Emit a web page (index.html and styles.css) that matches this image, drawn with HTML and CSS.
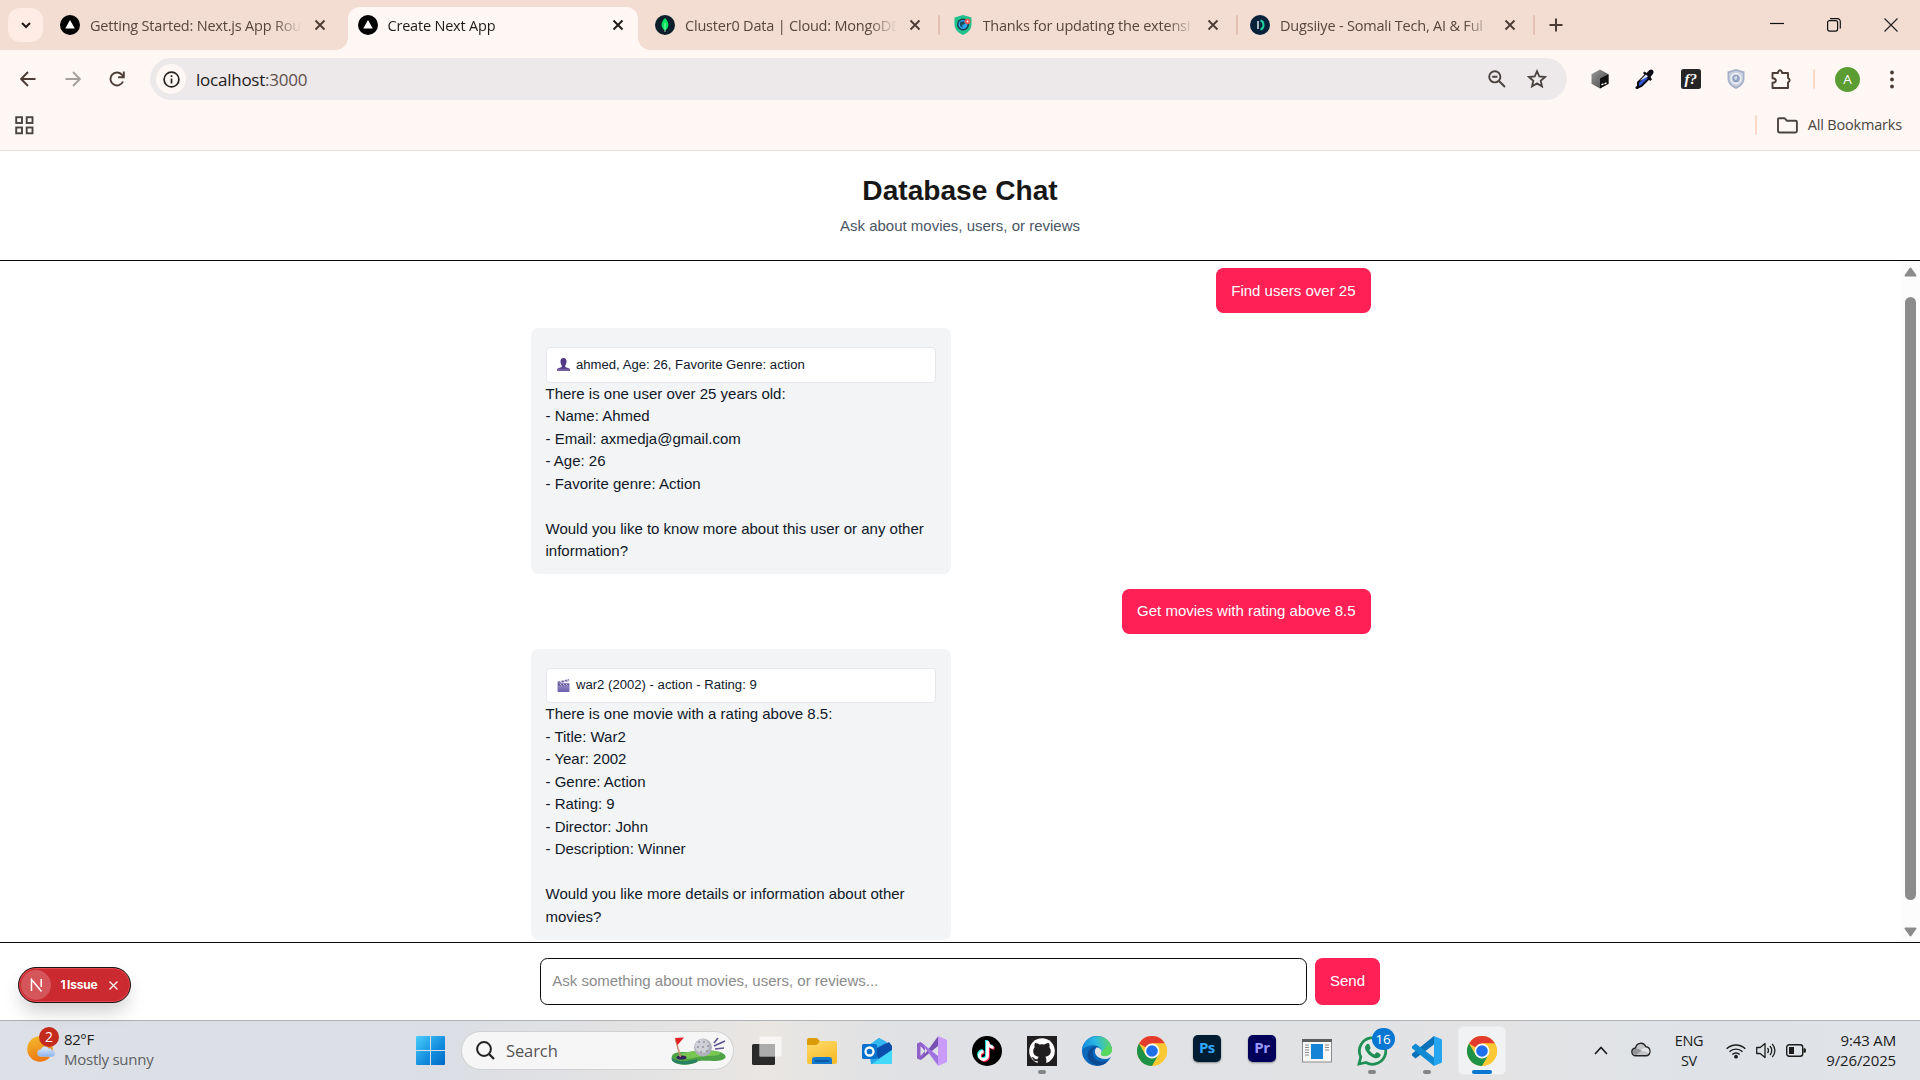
FILE: index.html
```html
<!DOCTYPE html>
<html lang="en">
<head>
<meta charset="utf-8">
<title>Create Next App</title>
<link rel="stylesheet" href="styles.css">
</head>
<body>
<svg class="defs" width="0" height="0" aria-hidden="true">
  <defs>
    <linearGradient id="sun" x1="0" y1="0" x2="0.3" y2="1"><stop offset="0" stop-color="#f2bd2c"/><stop offset="1" stop-color="#ee7a13"/></linearGradient>
    <linearGradient id="cloud" x1="0" y1="0" x2="0" y2="1"><stop offset="0" stop-color="#e3ecfa"/><stop offset="1" stop-color="#8db4ef"/></linearGradient>
    <linearGradient id="win" x1="0" y1="0" x2="1" y2="1"><stop offset="0" stop-color="#4bcdfc"/><stop offset="0.55" stop-color="#1490df"/><stop offset="1" stop-color="#0068c6"/></linearGradient>
    <linearGradient id="folder" x1="0" y1="0" x2="0.5" y2="1"><stop offset="0" stop-color="#ffdc6b"/><stop offset="1" stop-color="#f8bd2c"/></linearGradient>
    <linearGradient id="edge1" x1="0" y1="0.5" x2="1" y2="0.3"><stop offset="0" stop-color="#1388dd"/><stop offset="0.5" stop-color="#2cbbe2"/><stop offset="1" stop-color="#60d85a"/></linearGradient>
    <linearGradient id="clap" x1="0" y1="0" x2="0" y2="1"><stop offset="0" stop-color="#a095cc"/><stop offset="1" stop-color="#6a5fae"/></linearGradient>
    <linearGradient id="cube" x1="0" y1="0" x2="1" y2="1"><stop offset="0" stop-color="#999"/><stop offset="1" stop-color="#444"/></linearGradient>
    <symbol id="i-close" viewBox="0 0 12 12"><path d="M1.5 1.5l9 9M10.5 1.5l-9 9" stroke="currentColor" stroke-width="1.9"/></symbol>
    <symbol id="i-next" viewBox="0 0 20 20"><circle cx="10" cy="10" r="10" fill="#000"/><path d="M10 5l4.8 8.6H5.2z" fill="#fff"/></symbol>
    <symbol id="i-shield" viewBox="0 0 18 20"><path d="M9 0l8.500 2.500v6.500c0 5-3 8.500-8.500 11C3.500 17.500.5 14 .5 9V2.500z" fill="currentColor"/></symbol>
    <symbol id="i-chrome" viewBox="0 0 30 30">
      <circle cx="15" cy="15" r="15" fill="#fcc934"/>
      <path d="M2 7.500A15 15 0 0 1 28 7.500H15L8.500 11.250z" fill="#e33b2e"/>
      <path d="M2 7.500L8.500 18.750 15 22.500h6.500L15 30A15 15 0 0 1 2 7.500z" fill="#1e9347"/>
      <path d="M15 22.500L21.500 18.750 15 30z" fill="#1e9347"/>
      <path d="M28 7.500H15v7.500l6.500 3.750L15 30A15 15 0 0 0 28 7.500z" fill="#fcc934"/>
      <circle cx="15" cy="15" r="7.500" fill="#fff"/><circle cx="15" cy="15" r="5.800" fill="#1f6feb"/>
    </symbol>
  </defs>
</svg>

<header class="browser">
  <div class="tabstrip">
    <button class="tab-search"><svg width="12" height="12" viewBox="0 0 12 12"><path d="M2 4l4 4 4-4" fill="none" stroke="#1f1a18" stroke-width="2"/></svg></button>
    <div class="tab">
      <svg class="favicon"><use href="#i-next"/></svg><span class="tab-title">Getting Started: Next.js App Rou</span><svg class="tab-close"><use href="#i-close"/></svg>
    </div>
    <div class="tab active">
      <svg class="favicon"><use href="#i-next"/></svg><span class="tab-title">Create Next App</span><svg class="tab-close"><use href="#i-close"/></svg>
    </div>
    <div class="tab ruled">
      <svg class="favicon" viewBox="0 0 20 20"><circle cx="10" cy="10" r="10" fill="#0a1e2b"/><path d="M10 3c5 5 4 10 0 12.500C6 13 5 8 10 3z" fill="#00e560"/><path d="M10 8v9" stroke="#b7f5cf" stroke-width=".8"/></svg><span class="tab-title">Cluster0 Data | Cloud: MongoDB</span><svg class="tab-close"><use href="#i-close"/></svg>
    </div>
    <div class="tab ruled">
      <svg class="favicon" viewBox="0 0 20 20"><path d="M10 0l8.500 2.500V9c0 5-3 8.500-8.500 11C4.500 17.500 1.500 14 1.500 9V2.500z" fill="#1fc18c"/><circle cx="10" cy="9.500" r="6" fill="#173b4a"/><circle cx="10" cy="9.500" r="4.500" fill="#2da7f3"/><path d="M7 7l4-1 1 3-3 1 1 3-3-2z" fill="#17505c"/><circle cx="14.500" cy="6.500" r="2.800" fill="#f0524f"/><circle cx="14.500" cy="6.500" r="1" fill="#fff"/></svg><span class="tab-title">Thanks for updating the extensi</span><svg class="tab-close"><use href="#i-close"/></svg>
    </div>
    <div class="tab ruled">
      <svg class="favicon" viewBox="0 0 20 20"><circle cx="10" cy="10" r="10" fill="#07233b"/><path d="M10.500 5.500c4 1 4 8 0 9" fill="none" stroke="#1fd0a0" stroke-width="2"/><path d="M8 6v8" stroke="#d5e8ef" stroke-width="1.500"/></svg><span class="tab-title">Dugsiiye - Somali Tech, AI &amp; Ful</span><svg class="tab-close"><use href="#i-close"/></svg>
    </div>
    <button class="new-tab"><svg width="14" height="14" viewBox="0 0 14 14"><path d="M7 .5v13M.5 7h13" stroke="#4c3c35" stroke-width="2"/></svg></button>
    <div class="window-controls">
      <svg width="14" height="14" viewBox="0 0 14 14"><path d="M0 5.500h14" stroke="#111" stroke-width="1.200"/></svg>
      <svg width="14" height="14" viewBox="0 0 14 14"><rect x=".6" y="2.600" width="10" height="10.500" rx="2" fill="none" stroke="#111" stroke-width="1.200"/><path d="M3 .6h7a3 3 0 0 1 3.300 3.200V10.500" fill="none" stroke="#111" stroke-width="1.200"/></svg>
      <svg width="14" height="14" viewBox="0 0 14 14"><path d="M.5 .5l13 13M13.500 .5l-13 13" stroke="#222" stroke-width="1.200"/></svg>
    </div>
  </div>

  <div class="toolbar">
    <div class="nav">
      <svg width="16" height="16" viewBox="0 0 16 16"><path d="M15.500 8H1.500M8 1L1.200 8 8 15" fill="none" stroke="#4c3c35" stroke-width="1.900"/></svg>
      <svg width="16" height="16" viewBox="0 0 16 16"><path d="M.5 8h14M8 1l6.800 7L8 15" fill="none" stroke="#a79f9b" stroke-width="1.900"/></svg>
      <svg width="16" height="16" viewBox="0 0 16 16"><path d="M14 10.500A6.500 6.500 0 1 1 12.800 3.600L14.500 5.500" fill="none" stroke="#4c3c35" stroke-width="1.900"/><path d="M14.800 .5v5.800H9.200" fill="none" stroke="#4c3c35" stroke-width="1.900"/></svg>
    </div>
    <div class="omnibox">
      <span class="site-info"><svg width="17" height="17" viewBox="0 0 17 17"><circle cx="8.500" cy="8.500" r="7.400" fill="none" stroke="#27211f" stroke-width="1.700"/><path d="M8.500 7.500v5M8.500 4.200v1.900" stroke="#27211f" stroke-width="1.700"/></svg></span>
      <span class="url">localhost<span class="port">:3000</span></span>
      <svg class="omni-icon" width="18" height="18" viewBox="0 0 18 18"><circle cx="6.800" cy="6.800" r="5.600" fill="none" stroke="#4a423f" stroke-width="1.900"/><path d="M4.200 6.800h5.200M11 11l6 6" stroke="#4a423f" stroke-width="1.900"/></svg>
      <svg class="omni-icon" width="20" height="20" viewBox="0 0 20 20"><path d="M10 2.200l2.300 5.300 5.700.5-4.300 3.800 1.300 5.600L10 14.400l-5 3 1.300-5.600L2 8l5.700-.5z" fill="none" stroke="#4a423f" stroke-width="1.800"/></svg>
    </div>
    <div class="extensions">
      <svg width="18" height="20" viewBox="0 0 18 20"><path d="M9 .5l8.500 4.800v9.500L9 19.500.5 14.800V5.300z" fill="url(#cube)"/><path d="M9 9.500l8.500-4.200v9.500L9 19.500z" fill="#111"/><path d="M10.500 15.800l2-1M13.500 14.800l2-1" stroke="#fff" stroke-width="1.300"/></svg>
      <svg width="20" height="20" viewBox="0 0 20 20"><path d="M3 13.500L11 5.500l3.500 3.500-8 8-3.500 1.500z" fill="#3155d6" stroke="#0b0b14" stroke-width="2"/><path d="M8 4l1.500-1.500 2 1.500L14 1.500c3-2.500 6 .8 3.800 3.500L15.500 8l1.500 2.500-1.800 1.500z" fill="#0b0b14"/><path d="M4.500 12L11 5.500l2 2z" fill="#dfe4f5"/><circle cx="2" cy="18.500" r="1.500" fill="#0b0b14"/></svg>
      <svg width="20" height="20" viewBox="0 0 20 20"><rect width="20" height="20" rx="2.500" fill="#262626"/><text x="3.500" y="15" class="fq">f?</text></svg>
      <svg class="ext-shield" width="18" height="20" viewBox="0 0 18 20"><use href="#i-shield"/><path d="M9 2l6.700 2v5.200c0 3.900-2.200 6.600-6.700 8.600C4.500 15.800 2.300 13.100 2.300 9.200V4z" fill="#cbd2e2"/><circle cx="9" cy="9.500" r="5" fill="none" stroke="#eef1f7" stroke-width="1.300"/><circle cx="9" cy="9.500" r="3.700" fill="#95a3c3"/><path d="M7 8l3-1v3l-2 1z" fill="#d9dfea"/></svg>
      <svg width="21" height="21" viewBox="0 0 21 21"><path d="M1.500 4H7V3q2-3.400 4 0v1h6v5q3.400 2 0 4.500V19H1.500v-5.200c4.500-.3 4.500-4.300 0-4.600z" fill="none" stroke="#4c3c35" stroke-width="1.900" stroke-linejoin="round"/></svg>
    </div>
    <span class="bar-rule"></span>
    <span class="avatar">A</span>
    <svg class="menu-dots" width="4" height="19" viewBox="0 0 4 19"><g fill="#4c3c35"><circle cx="2" cy="2.500" r="1.900"/><circle cx="2" cy="9.500" r="1.900"/><circle cx="2" cy="16.500" r="1.900"/></g></svg>
  </div>

  <div class="bookmarks">
    <svg width="19" height="19" viewBox="0 0 19 19"><g fill="none" stroke="#4a4441" stroke-width="1.900"><rect x="1.200" y="1.200" width="5.800" height="5.800"/><rect x="11.700" y="1.200" width="5.800" height="5.800"/><rect x="1.200" y="11.500" width="5.800" height="5.800"/><rect x="11.700" y="11.500" width="5.800" height="5.800"/></g></svg>
    <span class="bar-rule"></span>
    <svg width="21" height="17" viewBox="0 0 21 17"><path d="M1 2.500Q1 1.200 2.300 1.200H7.500L10 3.700h8.500q1.400 0 1.400 1.400v9q0 1.400-1.400 1.400h-16Q1 15.500 1 14.100z" fill="none" stroke="#4a4441" stroke-width="1.900"/></svg>
    <span class="bookmarks-label">All Bookmarks</span>
  </div>
</header>

<main class="app">
  <div class="app-header">
    <h1>Database Chat</h1>
    <p>Ask about movies, users, or reviews</p>
  </div>
  <div class="scroller">
    <div class="scroll-view">
      <div class="messages">
        <div class="bubble user">Find users over 25</div>
        <div class="bubble bot">
          <div class="record"><svg width="13" height="13" viewBox="0 0 13 13"><path d="M6.500 0C9 0 9.700 1.800 9.500 4 9.300 6 8.500 7 8.200 7.800V9l4 1.500q.8.400.8 2.500H0Q0 10.900.8 10.500l4-1.500V7.800C4.500 7 3.700 6 3.500 4 3.300 1.800 4 0 6.500 0z" fill="#533a86"/><path d="M0 13q0-1.600.5-2.200h12q.5.600.5 2.200z" fill="#75619f"/></svg><span>ahmed, Age: 26, Favorite Genre: action</span></div>
          <p>There is one user over 25 years old:
- Name: Ahmed
- Email: axmedja@gmail.com
- Age: 26
- Favorite genre: Action

Would you like to know more about this user or any other information?</p>
        </div>
        <div class="bubble user">Get movies with rating above 8.5</div>
        <div class="bubble bot">
          <div class="record"><svg width="13" height="13" viewBox="0 0 13 13"><rect x=".5" y="4" width="12" height="9" rx=".8" fill="url(#clap)"/><path d="M.3 2.800L11.800 0l.6 2L.8 4.800z" fill="#75699f"/><path d="M3 2.200l2 1.400M6.500 1.300l2 1.400M10 .5l1.500 1.200" stroke="#e6e2f3" stroke-width="1.100"/><path d="M1 4.800h11v1.700H1z" fill="#5c4f92"/><path d="M3 4.800l1.500 1.700M6 4.800l1.500 1.700M9 4.800l1.500 1.700" stroke="#ddd7ef"/></svg><span>war2 (2002) - action - Rating: 9</span></div>
          <p>There is one movie with a rating above 8.5:
- Title: War2
- Year: 2002
- Genre: Action
- Rating: 9
- Director: John
- Description: Winner

Would you like more details or information about other movies?</p>
        </div>
      </div>
    </div>
    <div class="scrollbar">
      <svg width="13" height="10" viewBox="0 0 13 10"><path d="M6.500 1.500L11.500 8.500h-10z" fill="#8b8b8b" stroke="#8b8b8b" stroke-width="2" stroke-linejoin="round"/></svg>
      <span class="thumb"></span>
      <svg width="13" height="10" viewBox="0 0 13 10"><path d="M6.500 8.500L11.500 1.500h-10z" fill="#8b8b8b" stroke="#8b8b8b" stroke-width="2" stroke-linejoin="round"/></svg>
    </div>
  </div>
  <form class="composer">
    <div class="composer-row">
      <input type="text" placeholder="Ask something about movies, users, or reviews...">
      <button type="button">Send</button>
    </div>
  </form>
  <div class="issue-badge">
    <span class="issue-logo"><svg width="13" height="14" viewBox="0 0 13 14"><path d="M1.500 13V1.500L11.500 13.500M11.200 1v8" fill="none" stroke="#fff" stroke-width="1.500"/></svg></span>
    <span class="issue-text">1 Issue</span>
    <svg width="9" height="9" viewBox="0 0 9 9"><path d="M.5 .5l8 8M8.500 .5l-8 8" stroke="#fff" stroke-width="1.200"/></svg>
  </div>
</main>

<footer class="taskbar">
  <div class="weather">
    <span class="weather-icon">
      <svg width="29" height="26" viewBox="0 0 29 26"><circle cx="13" cy="13" r="12.800" fill="url(#sun)"/><path d="M14 20.500a3.500 3.500 0 0 1 0-7c1-3.500 6-3.800 7.500-1 3-.5 3.800 1.500 3.600 2.500 3.500 0 3.500 5.500 0 5.500z" fill="url(#cloud)" stroke="#a8c3f0" stroke-width=".6"/></svg>
      <span class="alert-count">2</span>
    </span>
    <span class="weather-text"><b>82°F</b><span>Mostly sunny</span></span>
  </div>
  <div class="start-group">
    <svg class="start" width="29" height="29" viewBox="0 0 29 29"><path d="M1 0h13v14H0V1q0-1 1-1zM15 0h13q1 0 1 1v13H15zM0 15h14v14H1q-1 0-1-1zM15 15h14v13q0 1-1 1H15z" fill="url(#win)"/></svg>
    <div class="search">
      <svg width="19" height="19" viewBox="0 0 19 19"><circle cx="8" cy="8" r="6.900" fill="none" stroke="#222" stroke-width="2"/><path d="M13 13l5 5" stroke="#222" stroke-width="2.300"/></svg>
      <span>Search</span>
      <svg width="56" height="28" viewBox="0 0 56 28"><path d="M1 19c1-4 8-4 16-4 9-1 21-3 32 0 6 2 8 6 2 8-7 2-15 0-23 1-6 4-17 5-24 2-3-2-4-4-3-7z" fill="#4da447"/><path d="M12 16c9-2 27-4 36-1 5 3-5 4-12 4-10 0-18 4-27 3-4-1-2-5 3-6z" fill="#79c653"/><path d="M1 21c5 4 15 4 25 1v3c-7 3-16 3-21 1-3-1-5-3-4-5z" fill="#288063"/><ellipse cx="10.500" cy="20.500" rx="5" ry="2" fill="#33255b"/><path d="M4.500 2.500L9.500 20" stroke="#cb8b72" stroke-width="1.500"/><path d="M4 1l9-.5-6.500 7.500z" fill="#e31f24"/><circle cx="32" cy="10.500" r="9" fill="#b0b1bc"/><circle cx="31" cy="9" r="7" fill="#cfcfd6"/><g fill="#92939f"><circle cx="28" cy="5" r="1"/><circle cx="33" cy="5" r="1"/><circle cx="27" cy="10" r="1"/><circle cx="32" cy="10" r="1"/><circle cx="37" cy="9" r="1"/><circle cx="30" cy="15" r="1"/><circle cx="36" cy="14" r="1"/></g><path d="M43 6l4-5M43 9l11-5M44 12l9-1" stroke="#5e5790" stroke-width="1.600"/></svg>
    </div>
  </div>
  <div class="apps">
    <span class="task"><svg width="30" height="30" viewBox="0 0 30 30"><rect x="0" y="8" width="23" height="21" rx="1.500" fill="#2a2a2a"/><rect x="7.500" y=".5" width="22" height="20" rx="1" fill="#fff" fill-opacity=".65"/><rect x="7.500" y="8" width="15.500" height="12.500" fill="#aaa" fill-opacity=".8"/></svg></span>
    <span class="task"><svg width="30" height="30" viewBox="0 0 30 30"><path d="M0 4Q0 2 2 2h8l3 3h3v6H0z" fill="#dc9b08"/><path d="M0 9h9q2 0 3.500-4H28q2 0 2 2v19q0 2-2 2H2q-2 0-2-2z" fill="url(#folder)"/><path d="M5 28v-4q0-3 3-3h14q3 0 3 3v4z" fill="#1478cc"/><path d="M8 25h14" stroke="#075196" stroke-width="1.500"/></svg></span>
    <span class="task"><svg width="30" height="30" viewBox="0 0 30 30"><path d="M6 10L17 2l13 8v16q0 2-2 2H9z" fill="#2aa5e9"/><path d="M13 13L27 6l3 4v4L16 23z" fill="#0b4eab"/><path d="M12 12l13-6-8-4-11 8z" fill="#35b8f1"/><path d="M10 28L30 14v12q0 2-2 2z" fill="#43d9fa"/><rect x="0" y="8" width="15" height="15" rx="1.500" fill="#0672ce"/><circle cx="7.500" cy="15.500" r="4" fill="none" stroke="#fff" stroke-width="2.300"/></svg></span>
    <span class="task"><svg width="30" height="30" viewBox="0 0 30 30"><path d="M0 7.500L3.500 6 8 9.500V20.500L3.500 24 0 22.500z" fill="#8e60c8"/><path d="M3.500 10v10L8 15z" fill="#e0e1e4"/><path d="M3.500 24L21 .500V10L8 20.500z" fill="#7550b0"/><path d="M3.500 6L8 9.500 21 20v9.500z" fill="#a173e2"/><path d="M21 0l9 4v22l-9 4z" fill="#c99af8"/></svg></span>
    <span class="task"><svg width="30" height="30" viewBox="0 0 30 30"><circle cx="15" cy="15" r="15" fill="#000"/><g fill="none" stroke-width="2.800"><path d="M15.500 5v14.500a4 4 0 1 1-4-4M15.500 6c.5 3.500 3 5 6 5.500" stroke="#25f4ee" transform="translate(-1-1)"/><path d="M15.500 5v14.500a4 4 0 1 1-4-4M15.500 6c.5 3.500 3 5 6 5.500" stroke="#fe2c55" transform="translate(1 1)"/><path d="M15.500 5v14.500a4 4 0 1 1-4-4M15.500 6c.5 3.500 3 5 6 5.500" stroke="#fff"/></g></svg></span>
    <span class="task running"><svg width="30" height="30" viewBox="0 0 30 30"><rect width="30" height="30" fill="#211e1f"/><circle cx="15" cy="15" r="12.800" fill="#fff"/><path d="M8 7c2-.2 3.500.8 4.500 1.600q2.500-.6 5 0C18.500 7.800 20 6.800 22 7q1 2.300.4 4.200Q24 13 23.800 15.500c-.3 3.500-2.500 4.800-5.500 5.300q1.200 1.200 1 3V28h-8.600v-3c-3 .6-4-.6-5-2.500l-1.500-1.500c2-.5 3 1.200 4 2 .8.500 1.700.4 2.500 0q.1-1.500 1-2.200c-3-.5-5.200-1.800-5.500-5.300Q6 13 7.600 11.200 7 9.300 8 7z" fill="#211e1f"/></svg></span>
    <span class="task"><svg width="30" height="30" viewBox="0 0 30 30"><circle cx="15" cy="15" r="15" fill="#0c69bd"/><path d="M0 14C1-2 27-6 30 13c.5 6-5 8-9 7-3-1-2-2-1.500-4C20 9 8 6 0 14z" fill="url(#edge1)"/><path d="M10.500 17c0 7 8 11 16 7-7 10-21 5-21-5 0-6 6-9 10-8-4 1-5 3.500-5 6z" fill="#0b4b96"/><path d="M14.500 11.500c-4 4-.5 11.500 9 11.500 3 0 5-1.500 6.500-3V14c-1 5-6 7-10 5.500-2-1 0-2-.3-4-.3-2.500-3-4.500-5.200-4z" fill="#e0e2e4"/><path d="M30 12c1 6-4.500 9-9 8-3-1-2-2-1.500-4L25 10z" fill="#57d660"/></svg></span>
    <span class="task"><svg width="30" height="30"><use href="#i-chrome"/></svg></span>
    <span class="task"><span class="adobe ps">Ps</span></span>
    <span class="task"><span class="adobe pr">Pr</span></span>
    <span class="task"><svg width="30" height="24" viewBox="0 0 30 24"><rect x=".5" y=".5" width="29" height="22.500" fill="#f7f7f7" stroke="#8b8b8b"/><path d="M0 0h30v3H0z" fill="#5d5d5d"/><rect x="9" y="5" width="12" height="15" fill="#1783d6"/><path d="M3 6h4M3 8.500h4M3 11h4M3 13.500h4M3 16h4M23 6h4M23 8.500h4M23 11h4" stroke="#8c8c8c"/></svg></span>
    <span class="task running"><svg width="30" height="30" viewBox="0 0 30 30"><path d="M2 28l1.800-7A13.200 13.200 0 1 1 9 26.500z" fill="#e5eae8" stroke="#1f8f56" stroke-width="2.800"/><path d="M9.500 8.500q2-1.500 3 .5l1 2.500q.3 1-1.200 2.500c1.300 2.300 3 3.700 5.200 4.500l1.700-1.900q.7-.6 1.500-.1l2.600 1.400q1 1.200-.6 3.200c-2.500 2.200-6 .8-9-1.200-3-2.200-5.500-5.500-5.700-8q-.1-2.200 1.500-3.400z" fill="#1f8f56"/></svg><span class="unread">16</span></span>
    <span class="task running"><svg width="30" height="30" viewBox="0 0 30 30"><path d="M22 0l8 3.500v23L22 30z" fill="#25a5f0"/><path d="M22 0v8.500L3.500 22.500 0 19.500q-.5-1 0-1.800z" fill="#0871b8"/><path d="M22 30v-8.500L3.500 7.500 0 10.500q-.5 1 0 1.800z" fill="#128bd3"/></svg></span>
    <span class="task current"><svg width="30" height="30"><use href="#i-chrome"/></svg></span>
  </div>
  <div class="tray">
    <svg class="chev" width="14" height="9" viewBox="0 0 14 9"><path d="M1 8l6-6.500L13 8" fill="none" stroke="#1c1c1c" stroke-width="1.700"/></svg>
    <svg class="drive" width="20" height="15" viewBox="0 0 20 15"><path d="M5 13.800C0 13.800-.8 7 4.500 6 5.500.5 12.500-.5 14.800 4.800c5.500.5 5.500 9 .2 9z" fill="#c3c5c8" stroke="#222" stroke-width="1.400"/><path d="M5 13c-4 0-4.500-5-.5-6.200 3-.5 4 .8 6 2L5 13z" fill="#919396"/><path d="M9.500 8L14 5.500c4 .2 5 3.500 4 5.500z" fill="#e3e5e8"/></svg>
    <span class="lang"><span>ENG</span><span>SV</span></span>
    <svg class="wifi" width="20" height="16" viewBox="0 0 20 16"><g fill="none" stroke="#1c1c1c" stroke-width="1.400"><path d="M.7 5.800a13.200 13.200 0 0 1 18.600 0M3.500 8.800a9.200 9.200 0 0 1 13 0M6.300 11.500a5.200 5.200 0 0 1 7.400 0"/></g><circle cx="10" cy="13.700" r="1.900" fill="#1c1c1c"/></svg>
    <svg class="sound" width="20" height="17" viewBox="0 0 20 17"><g fill="none" stroke="#1c1c1c" stroke-width="1.300" stroke-linejoin="round"><path d="M.7 5.500h3.500L9 1.500v14L4.200 11.500H.7z"/><path d="M11.500 6q2 2.500 0 5M14 4q3.500 4.500 0 9M16.300 1.800q5.200 6.700 0 13.400"/></g></svg>
    <svg class="battery" width="20" height="13" viewBox="0 0 20 13"><rect x=".7" y=".7" width="16" height="11.600" rx="2.500" fill="none" stroke="#1c1c1c" stroke-width="1.400"/><rect x="3" y="3" width="5" height="7" fill="#1c1c1c"/><path d="M17.500 4.200h1.200q1.300 0 1.300 2.300t-1.300 2.300h-1.200z" fill="#1c1c1c"/></svg>
    <span class="clock"><span>9:43 AM</span><span>9/26/2025</span></span>
  </div>
</footer>
</body>
</html>
```
FILE: styles.css
```css
* { box-sizing: border-box; }
html, body { margin: 0; height: 1080px; overflow: hidden; }
body {
  display: flex;
  flex-direction: column;
  width: 1920px;
  background: #fff;
  font-family: "Liberation Sans", Arial, sans-serif;
  font-size: 15px;
}
svg { display: block; flex: none; }
.defs { position: absolute; }
button { border: 0; padding: 0; font: inherit; }

/* Browser frame */
.browser {
  flex: none;
  height: 151px;
  background: #fff7f4;
  border-bottom: 1px solid #eadfdb;
  font-family: "Open Sans", "Noto Sans", sans-serif;
  font-size: 14.5px;
  color: #57463e;
}
.tabstrip {
  display: flex;
  height: 50px;
  padding-left: 8px;
  background: #f3ddd2;
}
.tab-search {
  display: flex;
  align-items: center;
  justify-content: center;
  width: 35px;
  height: 34px;
  margin: 8px 7px 0 0;
  border-radius: 12px;
  background: #ffece4;
}
.tab {
  position: relative;
  display: flex;
  align-items: center;
  width: 297.5px;
  height: 50px;
  padding-left: 10px;
}
.favicon { width: 20px; height: 20px; }
.tab-title {
  flex: none;
  width: 216px;
  margin: 0 8px 0 10px;
  white-space: nowrap;
  letter-spacing: -0.2px;
  -webkit-mask-image: linear-gradient(to right, #000 184px, transparent 212px);
  mask-image: linear-gradient(to right, #000 184px, transparent 212px);
}
.tab-close { width: 12px; height: 12px; color: #4c3c35; }
.tab.active { color: #1f1a18; z-index: 1; }
.tab.active > * { position: relative; }
.tab.active .tab-close { color: #1f1a18; }
.tab.active::before {
  content: "";
  position: absolute;
  left: 0;
  top: 7px;
  width: 290px;
  height: 43px;
  border-radius: 12px 12px 0 0;
  background: #fff7f4;
}
.tab.active::after {
  content: "";
  position: absolute;
  left: -12px;
  bottom: 0;
  width: 314px;
  height: 12px;
  background:
    radial-gradient(circle at 0 0, transparent 11.5px, #fff7f4 12px) left / 12px 12px no-repeat,
    radial-gradient(circle at 100% 0, transparent 11.5px, #fff7f4 12px) right / 12px 12px no-repeat;
}
.tab.ruled::after {
  content: "";
  width: 2px;
  height: 20px;
  margin-left: 17px;
  border-radius: 1px;
  background: #e2c1b2;
}
.new-tab { width: 40px; padding-left: 11px; background: none; }
.window-controls {
  display: flex;
  align-items: center;
  gap: 43px;
  margin-left: auto;
  padding-right: 22px;
}

.toolbar {
  display: flex;
  align-items: center;
  height: 58px;
  background: #fff7f4;
}
.nav { display: flex; gap: 28.5px; width: 150px; padding-left: 20px; }
.omnibox {
  display: flex;
  align-items: center;
  width: 1417px;
  height: 42px;
  padding: 0 20px 0 6px;
  border-radius: 21px;
  background: #ede8ea;
}
.site-info {
  display: flex;
  align-items: center;
  justify-content: center;
  width: 30px;
  height: 30px;
  border-radius: 50%;
  background: #fff7f4;
}
.url {
  flex: 1;
  padding-left: 10px;
  font-size: 17px;
  letter-spacing: -0.24px;
  color: #1f1a18;
}
.port { color: #5b504b; }
.omni-icon + .omni-icon { margin-left: 21.5px; }
.extensions { display: flex; align-items: center; gap: 26px; margin-left: 24px; }
.ext-shield { color: #a6b0c9; }
.bar-rule { width: 2px; height: 20px; border-radius: 1px; background: #fbd8c8; }
.toolbar .bar-rule { margin-left: 21px; }
.fq { font: italic bold 15px "Liberation Serif", serif; fill: #fff; }
.avatar {
  width: 25px;
  height: 25px;
  margin-left: 20px;
  border-radius: 50%;
  background: #5b9c33;
  color: #fff;
  font-size: 13.5px;
  line-height: 25px;
  text-align: center;
}
.menu-dots { margin-left: 30px; }

.bookmarks {
  display: flex;
  align-items: center;
  height: 34px;
  padding: 0 18px 0 15px;
}
.bookmarks .bar-rule { margin: 0 20px 0 auto; }
.bookmarks-label { margin: -2px 0 0 10px; letter-spacing: -0.18px; color: #4a4441; }

/* Chat page */
.app {
  position: relative;
  display: flex;
  flex-direction: column;
  height: 869px;
  color: #171717;
}
.app-header {
  height: 110px;
  padding-top: 22.5px;
  border-bottom: 1px solid #0a0a0a;
  text-align: center;
}
.app-header h1 {
  margin: 0 0 7.5px;
  font-size: 28.125px;
  line-height: 33.75px;
}
.app-header p { margin: 0; line-height: 22.5px; color: #4a5565; }
.scroller { display: flex; height: 681px; }
.scroll-view { flex: 1; overflow: hidden; }
.messages {
  display: flex;
  flex-direction: column;
  gap: 15px;
  width: 840px;
  margin: 0 auto;
  padding-top: 7.4px;
}
.bubble {
  padding: 11.25px 15px;
  border-radius: 7.5px;
  line-height: 22.5px;
}
.bubble.user { align-self: flex-end; background: #ff2056; color: #fff; }
.bubble.bot { width: 420px; background: #f3f4f6; color: #101828; }
.bubble p { margin: 0; white-space: pre-line; }
.record {
  display: flex;
  align-items: center;
  gap: 6.5px;
  height: 35.6px;
  margin-top: 7.5px;
  padding: 0 10px;
  border: 1px solid #e5e7eb;
  border-radius: 3.75px;
  background: #fff;
  font-size: 13.125px;
}
.scrollbar {
  display: flex;
  flex-direction: column;
  align-items: center;
  width: 19px;
  padding: 6px 0 5px;
  background: #fcfcfc;
}
.thumb {
  width: 11px;
  height: 603px;
  margin: 20px 0 auto;
  border-radius: 6px;
  background: #8b8b8b;
}
.composer { padding-top: 15px; border-top: 1px solid #0a0a0a; }
.composer-row { display: flex; gap: 7.5px; width: 840px; height: 47px; margin: 0 auto; }
.composer input {
  flex: 1;
  padding: 0 11.25px 2px;
  border: 1px solid #0a0a0a;
  border-radius: 7.5px;
  outline: 0;
  font: inherit;
}
.composer input::placeholder { color: #8b8b8b; }
.composer button { padding: 0 15px 2px; border-radius: 7.5px; background: #ff2056; color: #fff; }

.issue-badge {
  position: absolute;
  left: 18px;
  top: 816px;
  display: flex;
  align-items: center;
  width: 113px;
  height: 36px;
  padding-left: 2px;
  border: 1px solid #171717;
  border-radius: 18px;
  background: #ca2a30;
  box-shadow: inset 0 0 0 1px #e5484d, 0 12px 20px -4px rgba(0, 0, 0, .18), 0 4px 18px rgba(0, 0, 0, .04);
  color: #fff;
}
.issue-logo {
  display: flex;
  align-items: center;
  justify-content: center;
  width: 30px;
  height: 30px;
  border-radius: 50%;
  background: #d4555a;
}
.issue-text {
  width: 40px;
  margin: 0 8px 1px 9.5px;
  font: bold 12px/14px Inter, sans-serif;
  letter-spacing: -0.2px;
  word-spacing: -1px;
  white-space: nowrap;
}

/* Taskbar */
.taskbar {
  display: flex;
  height: 60px;
  border-top: 1px solid #aeb1b4;
  background: linear-gradient(90deg, #dde0e6 0, #dbdee4 440px, #e9e6e3 770px, #dfe1e4 900px, #dfe1e4 1150px, #e3e3e4 1500px, #dfe3e8 1700px, #e0e3e8 100%);
  font-family: "Open Sans", "Noto Sans", sans-serif;
  font-size: 15px;
  color: #1c1c1c;
}
.weather { display: flex; width: 416px; padding: 8px 0 0 27px; }
.weather-icon { position: relative; width: 37px; padding-top: 7px; }
.alert-count {
  position: absolute;
  left: 12px;
  top: -2px;
  width: 20px;
  height: 20px;
  border-radius: 50%;
  background: #c42b1c;
  color: #fff;
  font-size: 14px;
  line-height: 20px;
  text-align: center;
}
.weather-text { display: flex; flex-direction: column; line-height: 20px; letter-spacing: -0.4px; }
.weather-text b { font-weight: 400; }
.weather-text span { color: #5d6064; letter-spacing: -0.25px; }
.start-group { display: flex; align-items: center; width: 323px; }
.search {
  display: flex;
  align-items: center;
  width: 273px;
  height: 39px;
  margin-left: 16px;
  padding: 0 6px 0 14px;
  border: 1px solid #cfd0d2;
  border-radius: 20px;
  background: #f6f6f6;
}
.search span { flex: 1; padding-left: 11px; font-size: 16.5px; letter-spacing: -0.1px; color: #555; }
.apps { display: flex; }
.task {
  position: relative;
  display: flex;
  align-items: center;
  justify-content: center;
  width: 55.05px;
  height: 59px;
}
.task.running::after, .task.current::after {
  content: "";
  position: absolute;
  left: 23.5px;
  bottom: 6px;
  width: 8px;
  height: 4px;
  border-radius: 2px;
  background: #838587;
}
.task.current::after { left: 17.5px; width: 20px; background: #0877d1; }
.task.current::before {
  content: "";
  position: absolute;
  inset: 5px 3.5px 5px 3.5px;
  border: 1px solid #e8eaec;
  border-radius: 5px;
  background: #f1f2f4;
}
.task.current svg { position: relative; }
.adobe {
  width: 28px;
  height: 27px;
  margin-bottom: 4px;
  border-radius: 5px;
  box-shadow: 0 1px 2px rgba(0, 0, 0, .4);
  font-weight: 700;
  font-size: 15px;
  line-height: 25px;
  text-align: center;
  letter-spacing: -0.5px;
}
.adobe.ps { background: #001d33; color: #31a8ff; }
.adobe.pr { background: #00005b; color: #9999ff; }
.unread {
  position: absolute;
  left: 27px;
  top: 7px;
  width: 23px;
  height: 22px;
  border-radius: 11px;
  background: #0877d1;
  color: #fff;
  font-size: 13.5px;
  line-height: 22px;
  text-align: center;
  letter-spacing: -0.3px;
}
.tray { display: flex; align-items: center; flex: 1; padding: 0 24px 0 84.3px; }
.drive { margin: -2px 0 0 23px; }
.lang { display: flex; flex-direction: column; width: 40px; margin-left: 18px; line-height: 20px; font-size: 14.5px; letter-spacing: -0.3px; text-align: center; }
.wifi { margin-left: 17px; }
.sound, .battery { margin-left: 10px; }
.clock { display: flex; flex-direction: column; flex: 1; margin-top: -2px; line-height: 20px; font-size: 15px; letter-spacing: -0.15px; text-align: right; }
```
